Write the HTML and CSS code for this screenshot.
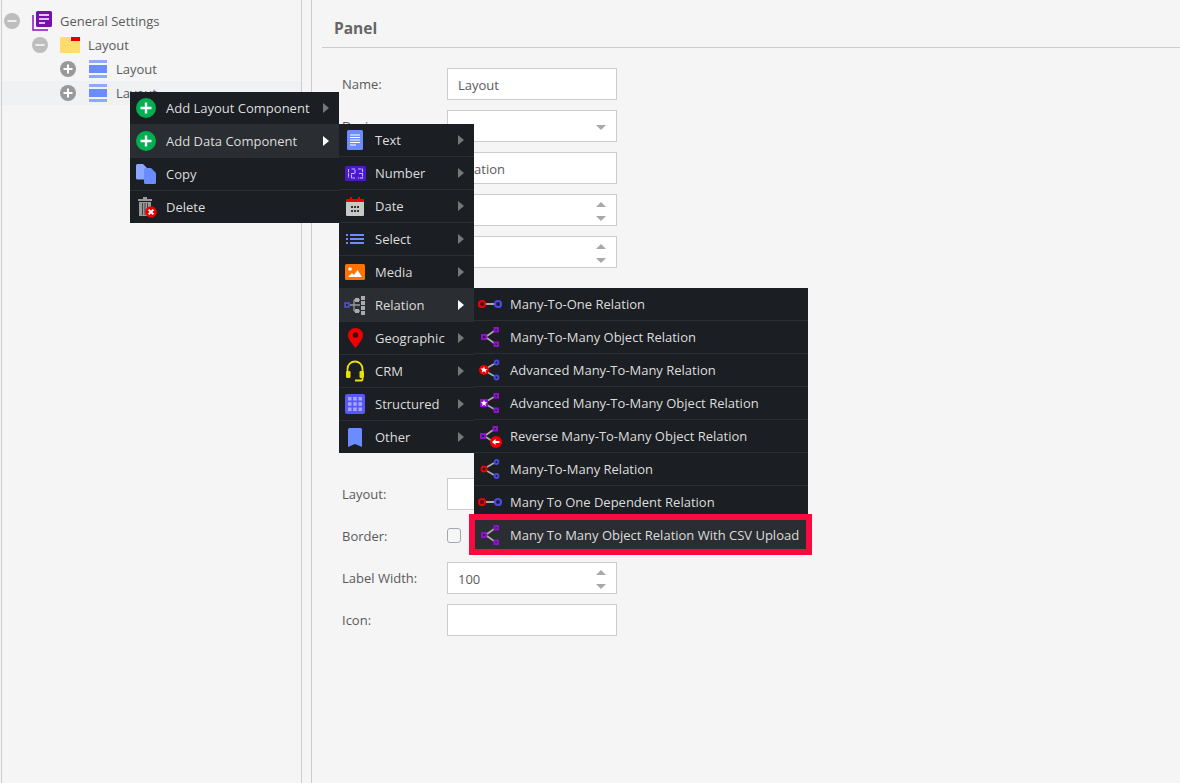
FILE: index.html
```html
<!DOCTYPE html>
<html lang="en">
<head>
<meta charset="utf-8">
<title>Panel</title>
<link rel="stylesheet" href="styles.css">
</head>
<body>
<svg class="defs" width="0" height="0" aria-hidden="true">
  <symbol id="plus-green" viewBox="0 0 20 20"><circle cx="10" cy="10" r="10" fill="#00b050"/><path d="M10 4.500v11M4.500 10h11" stroke="#fff" stroke-width="2.400"/></symbol>
  <symbol id="toggle-plus" viewBox="0 0 16 16"><circle cx="8" cy="8" r="8" fill="#999"/><path d="M8 3.500v9M3.500 8h9" stroke="#fff" stroke-width="2"/></symbol>
  <symbol id="toggle-minus" viewBox="0 0 16 16"><circle cx="8" cy="8" r="8" fill="#bdbdbd"/><path d="M3.500 8h9" stroke="#eee" stroke-width="2"/></symbol>
  <symbol id="layout-icon" viewBox="0 0 18 18"><path d="M0 0h18v3H0z" fill="#8fa8ff"/><path d="M0 5h18v8H0z" fill="#6a8cff"/><path d="M0 15h18v3H0z" fill="#8fa8ff"/></symbol>
  <symbol id="m2o" viewBox="0 0 24 24"><path d="M7 12h10" stroke="#aaa" stroke-width="2"/><circle cx="4" cy="12" r="3" fill="none" stroke="#f00000" stroke-width="2.200"/><circle cx="20" cy="12" r="3" fill="none" stroke="#4a4ae8" stroke-width="2.200"/></symbol>
  <symbol id="m2m-obj" viewBox="0 0 24 24"><path d="M9 11l7-5M9 13l7 5" stroke="#aaa" stroke-width="1.700"/><g fill="none" stroke="#9010d0" stroke-width="2"><rect x="4" y="10" width="4" height="4"/><rect x="16.500" y="3" width="3.500" height="3.500"/><rect x="16.500" y="17.500" width="3.500" height="3.500"/></g></symbol>
</svg>

<div class="page">
  <aside class="tree">
    <div class="tree-row level-0">
      <svg class="toggle" width="16" height="16"><use href="#toggle-minus"/></svg>
      <svg class="tree-icon" width="20" height="20" viewBox="0 0 20 20"><path d="M1 4v15h15" fill="none" stroke="#8a10c0" stroke-width="1.500"/><rect x="4" y="0" width="16" height="16" rx="1.500" fill="#7a0fb0"/><path d="M7 4h10M7 8h10M7 12h6" stroke="#fff" stroke-width="1.600"/></svg>
      <span>General Settings</span>
    </div>
    <div class="tree-row level-1">
      <svg class="toggle" width="16" height="16"><use href="#toggle-minus"/></svg>
      <svg class="tree-icon" width="20" height="16" viewBox="0 0 20 16"><path d="M0 1.500Q0 0 1.500 0H9l2 4h9v10.500Q20 16 18.500 16h-17Q0 16 0 14.500z" fill="#ffdc6b"/><path d="M11 0h9v4h-9z" fill="#e00000"/></svg>
      <span>Layout</span>
    </div>
    <div class="tree-row level-2">
      <svg class="toggle" width="16" height="16"><use href="#toggle-plus"/></svg>
      <svg class="tree-icon layout-mark" width="18" height="18"><use href="#layout-icon"/></svg>
      <span>Layout</span>
    </div>
    <div class="tree-row level-2 selected">
      <svg class="toggle" width="16" height="16"><use href="#toggle-plus"/></svg>
      <svg class="tree-icon layout-mark" width="18" height="18"><use href="#layout-icon"/></svg>
      <span>Layout</span>
    </div>
  </aside>

  <main class="panel">
    <h1 class="panel-title">Panel</h1>
    <form class="form">
      <div class="row"><label>Name:</label><div class="field">Layout</div></div>
      <div class="row"><label>Design:</label><div class="field"><span></span><i class="tri-down"></i></div></div>
      <div class="row"><label></label><div class="field">Citation</div></div>
      <div class="row"><label></label><div class="field"><span></span><span class="spin"><i class="tri-up"></i><i class="tri-down"></i></span></div></div>
      <div class="row"><label></label><div class="field"><span></span><span class="spin"><i class="tri-up"></i><i class="tri-down"></i></span></div></div>
      <div class="form-gap"></div>
      <div class="row"><label>Layout:</label><div class="field"></div></div>
      <div class="row"><label>Border:</label><div class="check-wrap"><span class="check"></span></div></div>
      <div class="row"><label>Label Width:</label><div class="field"><span>100</span><span class="spin"><i class="tri-up"></i><i class="tri-down"></i></span></div></div>
      <div class="row"><label>Icon:</label><div class="field"></div></div>
    </form>
  </main>
</div>

<nav class="menu menu-main">
  <div class="item"><span class="ico"><svg width="20" height="20"><use href="#plus-green"/></svg></span><span class="lbl">Add Layout Component</span><i class="arrow"></i></div>
  <div class="item active"><span class="ico"><svg width="20" height="20"><use href="#plus-green"/></svg></span><span class="lbl">Add Data Component</span><i class="arrow"></i></div>
  <div class="item"><span class="ico"><svg width="20" height="20" viewBox="0 0 20 20"><path d="M0 1.500Q0 0 1.500 0H7l4 4v11.500H1.500Q0 15.500 0 14z" fill="#8aa8ff"/><path d="M8 5.500Q8 4 9.500 4H15l5 5v9.500Q20 20 18.500 20h-9Q8 20 8 18.500z" fill="#6a8cff"/></svg></span><span class="lbl">Copy</span></div>
  <div class="item"><span class="ico"><svg width="22" height="22" viewBox="0 0 22 22"><path d="M3 3h14v2H3z" fill="#999"/><path d="M8 1h4v2H8z" fill="#999"/><path d="M4 6h12v14H4z" fill="#999"/><path d="M7.500 7v12M10 7v12M12.500 7v12" stroke="#444" stroke-width="1"/><circle cx="16" cy="16" r="5.800" fill="#f00000"/><path d="M13.600 13.600l4.800 4.800M18.400 13.600l-4.800 4.800" stroke="#fff" stroke-width="2"/></svg></span><span class="lbl">Delete</span></div>
</nav>

<nav class="menu menu-data">
  <div class="item"><span class="ico"><svg width="16" height="20" viewBox="0 0 16 20"><rect width="16" height="20" rx="1.500" fill="#6a8cff"/><path d="M3 5h10M3 7.500h10M3 10h10M3 12.500h10M3 15h6" stroke="#fff" stroke-width="1"/></svg></span><span class="lbl">Text</span><i class="arrow"></i></div>
  <div class="item"><span class="ico"><svg width="21" height="15" viewBox="0 0 21 15"><rect width="21" height="15" rx="1.500" fill="#4a19c8"/><g fill="none" stroke="#c4b6ff" stroke-width="1.100" stroke-dasharray="3.500 .7"><path d="M3.500 3v9"/><path d="M6.500 3h3.500v4.500H6.500V12h3.500"/><path d="M13 3h4.500v9H13M14 7.500h3.500"/></g></svg></span><span class="lbl">Number</span><i class="arrow"></i></div>
  <div class="item"><span class="ico"><svg width="18" height="20" viewBox="0 0 18 20"><path d="M0 4Q0 3 1 3h16q1 0 1 1v2H0z" fill="#f00000"/><path d="M4 1h2v4H4zM12 1h2v4h-2z" fill="#f00000"/><path d="M0 6h18v13q0 1-1 1H1q-1 0-1-1z" fill="#c8c8c8"/><path d="M5 10h2v2H5zM8 10h2v2H8zM11 10h2v2h-2zM5 14h2v2H5zM8 14h2v2H8zM11 14h2v2h-2z" fill="#333"/></svg></span><span class="lbl">Date</span><i class="arrow"></i></div>
  <div class="item"><span class="ico"><svg width="18" height="10" viewBox="0 0 18 10"><path d="M0 0h2v2H0zM4 0h14v2H4zM0 4h2v2H0zM4 4h14v2H4zM0 8h2v2H0zM4 8h14v2H4z" fill="#6a8cff"/></svg></span><span class="lbl">Select</span><i class="arrow"></i></div>
  <div class="item"><span class="ico"><svg width="20" height="16" viewBox="0 0 20 16"><rect width="20" height="16" rx="1.500" fill="#ff7200"/><circle cx="5" cy="5" r="1.800" fill="#fff"/><path d="M3 13l4-4 2 2 3.500-5L17 13z" fill="#fff"/></svg></span><span class="lbl">Media</span><i class="arrow"></i></div>
  <div class="item active"><span class="ico"><svg width="22" height="20" viewBox="0 0 22 20"><path d="M6 10h4M10 5v11M10 5h6M10 16h6M10 10h6" fill="none" stroke="#999" stroke-width="1.300"/><rect x="1" y="8" width="4" height="4" fill="none" stroke="#5050f0" stroke-width="1.500"/><path d="M17 1h4v4h-4zM17 6h4v4h-4zM17 11h4v4h-4zM17 16h4v4h-4z" fill="#aaa"/><path d="M11 3h4v4h-4zM11 14h4v4h-4z" fill="#aaa"/></svg></span><span class="lbl">Relation</span><i class="arrow"></i></div>
  <div class="item"><span class="ico"><svg width="15" height="20" viewBox="0 0 15 20"><path d="M7.500 0C3.300 0 0 3.300 0 7.300 0 12 7.500 20 7.500 20S15 12 15 7.300C15 3.300 11.700 0 7.500 0z" fill="#f00000"/><circle cx="7.500" cy="7" r="2.700" fill="#3a0a0a"/></svg></span><span class="lbl">Geographic</span><i class="arrow"></i></div>
  <div class="item"><span class="ico"><svg width="20" height="22" viewBox="0 0 20 22"><path d="M2.500 12V9a7.500 7.500 0 0 1 15 0v3" fill="none" stroke="#e8e000" stroke-width="1.800"/><rect x="1" y="11" width="4.500" height="7" rx="1.200" fill="#e8e000"/><rect x="14.500" y="11" width="4.500" height="7" rx="1.200" fill="#e8e000"/><path d="M17.500 18v1.500q0 1-1 1H10" fill="none" stroke="#e8e000" stroke-width="1.800"/></svg></span><span class="lbl">CRM</span><i class="arrow"></i></div>
  <div class="item"><span class="ico"><svg width="20" height="20" viewBox="0 0 20 20"><rect width="20" height="20" rx="2" fill="#5858f8"/><path d="M3 3h3.500v3.500H3zM8.250 3h3.500v3.500h-3.500zM13.500 3H17v3.500h-3.500zM3 8.250h3.500v3.500H3zM8.250 8.250h3.500v3.500h-3.500zM13.500 8.250H17v3.500h-3.500zM3 13.500h3.500V17H3zM8.250 13.500h3.500V17h-3.500zM13.500 13.500H17V17h-3.500z" fill="#a5a5ff"/></svg></span><span class="lbl">Structured</span><i class="arrow"></i></div>
  <div class="item"><span class="ico"><svg width="14" height="19" viewBox="0 0 14 19"><path d="M0 1.500Q0 0 1.500 0h11Q14 0 14 1.500V19l-7-3-7 3z" fill="#6a8cff"/></svg></span><span class="lbl">Other</span><i class="arrow"></i></div>
</nav>

<nav class="menu menu-relation">
  <div class="item"><span class="ico"><svg width="24" height="24"><use href="#m2o"/></svg></span><span class="lbl">Many-To-One Relation</span></div>
  <div class="item"><span class="ico"><svg width="24" height="24"><use href="#m2m-obj"/></svg></span><span class="lbl">Many-To-Many Object Relation</span></div>
  <div class="item"><span class="ico"><svg width="24" height="24" viewBox="0 0 24 24"><path d="M9 10l7-4M9 14l7 4" stroke="#aaa" stroke-width="1.700"/><circle cx="6" cy="12" r="5" fill="#f00000"/><path d="M6 8.500l1 2.400 2.500.2-1.900 1.600.6 2.400L6 13.300l-2.200 1.300.6-2.400-1.900-1.600 2.500-.2z" fill="#fff"/><g fill="none" stroke="#4a4ae8" stroke-width="1.800"><circle cx="18.500" cy="4.500" r="2"/><circle cx="18.500" cy="19.500" r="2"/></g></svg></span><span class="lbl">Advanced Many-To-Many Relation</span></div>
  <div class="item"><span class="ico"><svg width="24" height="24" viewBox="0 0 24 24"><path d="M9 10l7-4M9 14l7 4" stroke="#aaa" stroke-width="1.700"/><rect x="2" y="8" width="8" height="8" fill="#9010d0"/><path d="M6 8.800l.9 2.200 2.300.2-1.800 1.500.6 2.200L6 13.700l-2 1.200.6-2.200-1.800-1.500 2.300-.2z" fill="#fff"/><g fill="none" stroke="#9010d0" stroke-width="2"><rect x="16.500" y="3" width="3.500" height="3.500"/><rect x="16.500" y="17.500" width="3.500" height="3.500"/></g></svg></span><span class="lbl">Advanced Many-To-Many Object Relation</span></div>
  <div class="item"><span class="ico"><svg width="24" height="24" viewBox="0 0 24 24"><path d="M8 11l7-5M8 13l6 4" stroke="#aaa" stroke-width="1.700"/><g fill="none" stroke="#9010d0" stroke-width="2"><rect x="3" y="10" width="4" height="4"/><rect x="15.500" y="3" width="3.500" height="3.500"/></g><circle cx="18" cy="18" r="6" fill="#f00000"/><path d="M14 18l3.500-3v2h4v2h-4v2z" fill="#fff"/></svg></span><span class="lbl">Reverse Many-To-Many Object Relation</span></div>
  <div class="item"><span class="ico"><svg width="24" height="24" viewBox="0 0 24 24"><path d="M9 10l7-4M9 14l7 4" stroke="#aaa" stroke-width="1.700"/><circle cx="6" cy="12" r="2.500" fill="none" stroke="#f00000" stroke-width="2"/><g fill="none" stroke="#4a4ae8" stroke-width="1.800"><circle cx="18.500" cy="5" r="2"/><circle cx="18.500" cy="19" r="2"/></g></svg></span><span class="lbl">Many-To-Many Relation</span></div>
  <div class="item"><span class="ico"><svg width="24" height="24"><use href="#m2o"/></svg></span><span class="lbl">Many To One Dependent Relation</span></div>
  <div class="item active"><span class="ico"><svg width="24" height="24"><use href="#m2m-obj"/></svg></span><span class="lbl">Many To Many Object Relation With CSV Upload</span></div>
</nav>
<div class="callout"></div>
</body>
</html>
```

FILE: styles.css
```css
* { box-sizing: border-box; }
html, body { margin: 0; height: 100%; overflow: hidden; }
body { background: #f5f5f5; font: 13px/18px "Open Sans", sans-serif; color: #5a5a5a; position: relative; }
.defs { position: absolute; }
.page { display: flex; height: 783px; }

.tree { width: 301px; margin-left: 1px; padding-top: 9px; border-left: 1px solid #ccc; border-right: 1px solid #ccc; flex: none; }
.tree-row { display: flex; align-items: center; height: 24px; }
.level-0 { padding-left: 2px; }
.level-1 { padding-left: 30px; }
.level-2 { padding-left: 58px; }
.selected { background: #f0f1f3; }
.toggle { flex: none; margin-right: 12px; }
.tree-icon { flex: none; margin-right: 8px; }
.layout-mark { margin-left: 1px; margin-right: 9px; }

.panel { flex: 1; margin-left: 9px; border-left: 1px solid #ccc; padding-left: 10px; }
.panel-title { margin: 0; height: 48px; padding: 18px 0 0 12px; font-size: 15.500px; line-height: 20px; font-weight: 700; color: #666; border-bottom: 1px solid #ccc; }
.form { padding: 20px 0 0 20px; }
.row { display: flex; align-items: center; height: 32px; margin-bottom: 10px; }
.row label { width: 105px; flex: none; }
.field { width: 170px; height: 32px; background: #fff; border: 1px solid #ccc; display: flex; align-items: center; justify-content: space-between; padding: 2px 10px 0; }
.form-gap { height: 200px; }
.check-wrap { width: 170px; height: 32px; padding-top: 8px; }
.check { display: block; width: 14px; height: 15px; border: 1.500px solid #a0a8b4; border-radius: 3px; background: #f6f6f6; }
.spin { display: flex; flex-direction: column; gap: 9px; }
.tri-up, .tri-down { display: block; width: 0; height: 0; border-left: 5.500px solid transparent; border-right: 5.500px solid transparent; }
.tri-up { border-bottom: 5px solid #a8a8a8; }
.tri-down { border-top: 5px solid #a8a8a8; }

.menu { position: absolute; background: #1b1e22; color: #ddd; }
.menu-main { left: 130px; top: 92px; width: 209px; }
.menu-data { left: 339px; top: 124px; width: 135px; }
.menu-relation { left: 474px; top: 288px; width: 334px; }
.item { display: flex; align-items: center; height: 33px; border-bottom: 1px solid #2b2e32; }
.item:last-child { height: 32px; border-bottom: 0; }
.item.active { background: #2a2d31; }
.ico { flex: none; width: 32px; margin-right: 4px; display: flex; align-items: center; justify-content: center; }
.lbl { flex: 1; white-space: nowrap; }
.arrow { flex: none; width: 0; height: 0; margin-right: 10px; border-left: 6px solid #777; border-top: 5px solid transparent; border-bottom: 5px solid transparent; }
.active .arrow { border-left-color: #fff; }
.callout { position: absolute; left: 469px; top: 514px; width: 343px; height: 41px; border: 6px solid #fa0a3e; }
```
